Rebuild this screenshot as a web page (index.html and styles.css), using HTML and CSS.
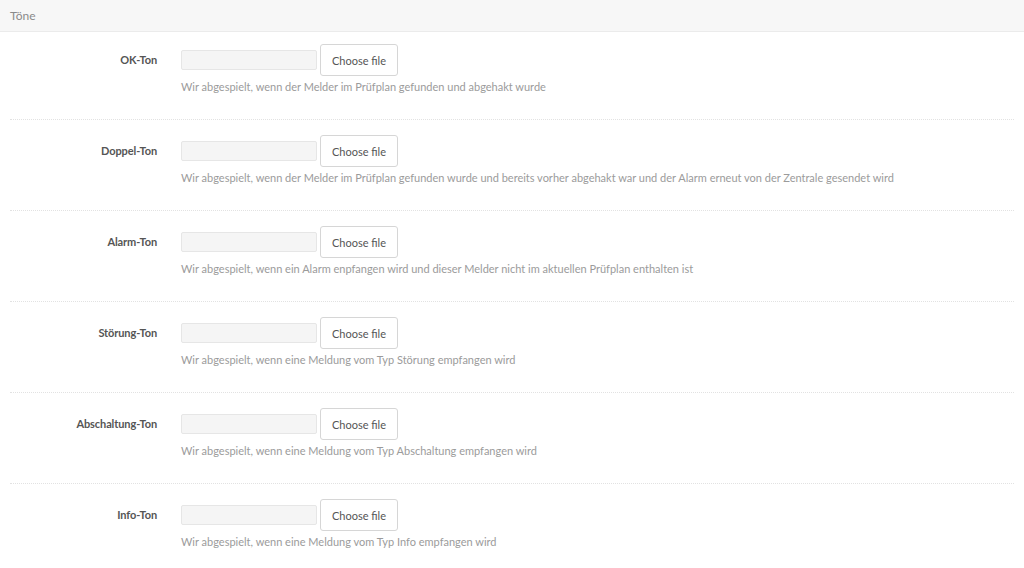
FILE: index.html
```html
<!DOCTYPE html>
<html lang="de">
<head>
    <meta charset="UTF-8">
    <meta name="viewport" content="width=device-width, initial-scale=1.0">
    <title>Töne</title>
    <link rel="stylesheet" href="styles.css">
</head>
<body>
    <div class="panel">
        <div class="panel-heading">Töne</div>
        <div class="panel-body">
            <div class="form-row">
                <label class="row-label">OK-Ton</label>
                <div class="row-control">
                    <div class="file-picker">
                        <input type="text" class="file-name" readonly>
                        <button type="button" class="file-btn">Choose file</button>
                    </div>
                    <p class="help">Wir abgespielt, wenn der Melder im Prüfplan gefunden und abgehakt wurde</p>
                </div>
            </div>
            <div class="form-row">
                <label class="row-label">Doppel-Ton</label>
                <div class="row-control">
                    <div class="file-picker">
                        <input type="text" class="file-name" readonly>
                        <button type="button" class="file-btn">Choose file</button>
                    </div>
                    <p class="help">Wir abgespielt, wenn der Melder im Prüfplan gefunden wurde und bereits vorher abgehakt war und der Alarm erneut von der Zentrale gesendet wird</p>
                </div>
            </div>
            <div class="form-row">
                <label class="row-label">Alarm-Ton</label>
                <div class="row-control">
                    <div class="file-picker">
                        <input type="text" class="file-name" readonly>
                        <button type="button" class="file-btn">Choose file</button>
                    </div>
                    <p class="help">Wir abgespielt, wenn ein Alarm enpfangen wird und dieser Melder nicht im aktuellen Prüfplan enthalten ist</p>
                </div>
            </div>
            <div class="form-row">
                <label class="row-label">Störung-Ton</label>
                <div class="row-control">
                    <div class="file-picker">
                        <input type="text" class="file-name" readonly>
                        <button type="button" class="file-btn">Choose file</button>
                    </div>
                    <p class="help">Wir abgespielt, wenn eine Meldung vom Typ Störung empfangen wird</p>
                </div>
            </div>
            <div class="form-row">
                <label class="row-label">Abschaltung-Ton</label>
                <div class="row-control">
                    <div class="file-picker">
                        <input type="text" class="file-name" readonly>
                        <button type="button" class="file-btn">Choose file</button>
                    </div>
                    <p class="help">Wir abgespielt, wenn eine Meldung vom Typ Abschaltung empfangen wird</p>
                </div>
            </div>
            <div class="form-row">
                <label class="row-label">Info-Ton</label>
                <div class="row-control">
                    <div class="file-picker">
                        <input type="text" class="file-name" readonly>
                        <button type="button" class="file-btn">Choose file</button>
                    </div>
                    <p class="help">Wir abgespielt, wenn eine Meldung vom Typ Info empfangen wird</p>
                </div>
            </div>
        </div>
    </div>
</body>
</html>
```

FILE: styles.css
```css
body {
    margin: 0;
    background-color: #FFFFFF;
    font-family: Lato, "Open Sans", sans-serif;
    font-size: 12px;
    color: #555555;
}

.panel-heading {
    height: 32px;
    line-height: 32px;
    padding: 0 10px;
    background-color: #F7F7F7;
    border-bottom: 1px solid #EBEBEB;
    box-sizing: border-box;
    color: #8A8A8A;
    font-size: 12px;
}

.panel-body {
    padding: 12px 10px 0;
}

.form-row {
    display: grid;
    grid-template-columns: 147px 1fr;
    column-gap: 24px;
    padding-bottom: 24px;
    margin-bottom: 15px;
    border-bottom: 1px dotted #E2E2E2;
}

.row-label {
    height: 32px;
    line-height: 32px;
    text-align: right;
    font-weight: bold;
    font-size: 11px;
    letter-spacing: -0.1px;
    color: #555555;
}

.file-picker {
    display: flex;
    align-items: center;
    gap: 3px;
}

.file-name {
    width: 136px;
    height: 20px;
    box-sizing: border-box;
    margin: 0;
    background-color: #F5F5F5;
    border: 1px solid #E6E6E6;
    border-radius: 2px;
    outline: none;
}

.file-btn {
    width: 78px;
    height: 32px;
    margin: 0;
    padding: 0;
    background-color: #FFFFFF;
    border: 1px solid #D6D6D6;
    border-radius: 3px;
    font-family: inherit;
    font-size: 11px;
    color: #555555;
    cursor: pointer;
}

.file-btn:hover {
    background-color: #F5F5F5;
}

.help {
    margin: 2px 0 0;
    line-height: 17px;
    color: #9B9B9B;
    font-size: 11px;
}
```
